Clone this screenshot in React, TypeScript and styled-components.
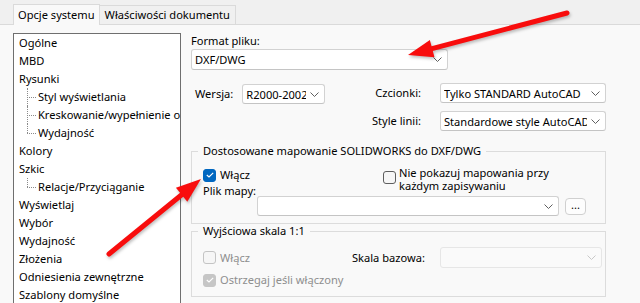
import React from 'react';
import styled, {createGlobalStyle} from 'styled-components';

const GlobalStyle = createGlobalStyle`
  html, body {
    margin: 0;
    padding: 0;
  }
  body {
    font-family: "Noto Sans", "Open Sans", sans-serif;
    font-size: 11.1px;
    color: #000;
    background: #f0f0f0;
  }
`;

interface TreeNode {
  name: string;
  child?: boolean;
  last?: boolean;
}

const treeItems: TreeNode[] = [
  {name: 'Ogólne'},
  {name: 'MBD'},
  {name: 'Rysunki'},
  {name: 'Styl wyświetlania', child: true},
  {name: 'Kreskowanie/wypełnienie obszaru', child: true},
  {name: 'Wydajność', child: true, last: true},
  {name: 'Kolory'},
  {name: 'Szkic'},
  {name: 'Relacje/Przyciąganie', child: true, last: true},
  {name: 'Wyświetlaj'},
  {name: 'Wybór'},
  {name: 'Wydajność'},
  {name: 'Złożenia'},
  {name: 'Odniesienia zewnętrzne'},
  {name: 'Szablony domyślne'},
];

export default function App() {
  return (
    <Page>
      <GlobalStyle/>
      <TabBar>
        <Tab active>Opcje systemu</Tab>
        <Tab>Właściwości dokumentu</Tab>
      </TabBar>

      <Content>
        <Tree>
          {treeItems.map((item, i) => (
            <TreeItem key={i} child={item.child} last={item.last}>
              {item.name}
            </TreeItem>
          ))}
        </Tree>

        <Pane>
          <FieldLabel>Format pliku:</FieldLabel>
          <Select width={257} height={21}>DXF/DWG</Select>

          <OptionsRow>
            <VersionBox>
              <FieldLabel>Wersja:</FieldLabel>
              <Select width={83} height={20}>R2000-2002</Select>
            </VersionBox>
            <OptionsGrid>
              <FieldLabel>Czcionki:</FieldLabel>
              <Select width={166} height={20}>Tylko STANDARD AutoCAD</Select>
              <FieldLabel>Style linii:</FieldLabel>
              <Select width={166} height={20}>Standardowe style AutoCAD</Select>
            </OptionsGrid>
          </OptionsRow>

          <Group>
            <Legend>Dostosowane mapowanie SOLIDWORKS do DXF/DWG</Legend>
            <MapRow>
              <MapLeft>
                <CheckItem>
                  <Check checked/>
                  <span>Włącz</span>
                </CheckItem>
                <MapLabel>Plik mapy:</MapLabel>
              </MapLeft>
              <NoShowItem>
                <Check/>
                <TwoLine>
                  Nie pokazuj mapowania przy<br/>każdym zapisywaniu
                </TwoLine>
              </NoShowItem>
            </MapRow>
            <ComboRow>
              <Select width={302} height={20}/>
              <DotsButton>...</DotsButton>
            </ComboRow>
          </Group>

          <Group second>
            <Legend>Wyjściowa skala 1:1</Legend>
            <ScaleRow>
              <CheckItem disabled width={149}>
                <Check disabled/>
                <span>Włącz</span>
              </CheckItem>
              <ScaleLabel>Skala bazowa:</ScaleLabel>
              <Select width={162} height={21} disabled/>
            </ScaleRow>
            <WarnRow>
              <CheckItem disabled>
                <Check checked disabled/>
                <span>Ostrzegaj jeśli włączony</span>
              </CheckItem>
            </WarnRow>
          </Group>
        </Pane>
      </Content>

      <Arrows viewBox="0 0 640 303">
        <Arrow from={[567, 13]} to={[408, 55]}/>
        <Arrow from={[109, 254]} to={[201, 179]}/>
      </Arrows>
    </Page>
  );
}

function Select({width, height, disabled, children}: {
  width: number;
  height: number;
  disabled?: boolean;
  children?: React.ReactNode;
}) {
  return (
    <SelectBox style={{width, height}} disabled={disabled}>
      <SelectText>{children}</SelectText>
      <svg width="9" height="5" viewBox="0 0 9 5">
        <path d="M0.5 0.5 L4.5 4.5 L8.5 0.5" fill="none" stroke={disabled ? '#c8c8c8' : '#5f5f5f'} strokeWidth="1"/>
      </svg>
    </SelectBox>
  );
}

function Check({checked, disabled}: {checked?: boolean; disabled?: boolean}) {
  return (
    <CheckBox checked={checked} disabled={disabled}>
      {checked &&
        <svg width="8" height="6" viewBox="0 0 8 6">
          <path d="M0.8 3 L3 5 L7.2 0.8" fill="none" stroke="#fff" strokeWidth="1.1"/>
        </svg>
      }
    </CheckBox>
  );
}

function Arrow({from, to}: {from: [number, number]; to: [number, number]}) {
  const dx = from[0] - to[0];
  const dy = from[1] - to[1];
  const len = Math.hypot(dx, dy);
  const ux = dx / len;
  const uy = dy / len;
  const head = 25;
  const half = 9;
  const bx = to[0] + ux * head;
  const by = to[1] + uy * head;
  const p1 = `${bx - uy * half},${by + ux * half}`;
  const p2 = `${bx + uy * half},${by - ux * half}`;
  const nx = to[0] + ux * (head - 6);
  const ny = to[1] + uy * (head - 6);
  return (
    <g>
      <line x1={from[0]} y1={from[1]} x2={nx} y2={ny} stroke="#f80d0d" strokeWidth="5" strokeLinecap="round"/>
      <polygon points={`${to[0]},${to[1]} ${p1} ${p2}`} fill="#f80d0d"/>
    </g>
  );
}

const Page = styled.div`
  position: relative;
  width: 640px;
  height: 303px;
  overflow: hidden;
  display: flex;
  flex-direction: column;
`;

const TabBar = styled.div`
  height: 25px;
  box-sizing: border-box;
  display: flex;
  align-items: flex-end;
  padding-left: 13px;
  border-bottom: 1px solid #dadada;
  background: #f0f0f0;
`;

const Tab = styled.div<{active?: boolean}>`
  box-sizing: border-box;
  height: ${props => props.active ? '21px' : '19px'};
  line-height: ${props => props.active ? '20px' : '18px'};
  padding: 0 ${props => props.active ? '4px' : '5px'};
  margin-bottom: ${props => props.active ? '-1px' : '0'};
  background: ${props => props.active ? '#f9f9f9' : '#f0f0f0'};
  border: 1px solid #dadada;
  border-bottom: none;
  border-left: ${props => props.active ? '1px solid #dadada' : 'none'};
  white-space: nowrap;
`;

const Content = styled.div`
  flex: 1;
  min-height: 0;
  display: flex;
  padding: 8px 0 0 13px;
  background: #f9f9f9;
`;

const Tree = styled.div`
  flex-shrink: 0;
  width: 168px;
  box-sizing: border-box;
  border: 1px solid #6f6f6f;
  border-bottom: none;
  background: #fff;
  overflow: hidden;
`;

const TreeItem = styled.div<{child?: boolean; last?: boolean}>`
  position: relative;
  height: 18px;
  line-height: 18px;
  padding-left: ${props => props.child ? '24px' : '5px'};
  white-space: nowrap;

  &::before {
    content: ${props => props.child ? "''" : 'none'};
    position: absolute;
    left: 13px;
    top: 9px;
    width: 9px;
    border-top: 1px dotted #8a8a8a;
  }

  &::after {
    content: ${props => props.child ? "''" : 'none'};
    position: absolute;
    left: 13px;
    top: 0;
    height: ${props => props.last ? '9px' : '18px'};
    border-left: 1px dotted #8a8a8a;
  }
`;

const Pane = styled.div`
  margin-left: 10px;
  width: 415px;
  padding-top: 1px;
  display: flex;
  flex-direction: column;
`;

const FieldLabel = styled.div`
  line-height: 14px;
  white-space: nowrap;
`;

const SelectBox = styled.div<{disabled?: boolean}>`
  box-sizing: border-box;
  display: flex;
  align-items: center;
  gap: 4px;
  padding: 0 5px 0 3px;
  margin-top: 1px;
  background: ${props => props.disabled ? '#fafafa' : '#fff'};
  border: 1px solid ${props => props.disabled ? '#e6e6e6' : '#d2d2d2'};
  border-bottom-color: ${props => props.disabled ? '#e6e6e6' : '#c4c4c4'};
  border-radius: 3px;
`;

const SelectText = styled.span`
  flex: 1;
  overflow: hidden;
  white-space: nowrap;
`;

const OptionsRow = styled.div`
  display: flex;
  align-items: flex-start;
  margin-top: 13px;
`;

const VersionBox = styled.div`
  display: flex;
  align-items: center;
  gap: 9px;
  padding-left: 4px;
  margin-top: 1px;

  ${SelectBox} {
    margin-top: 0;
  }
`;

const OptionsGrid = styled.div`
  margin-left: auto;
  display: grid;
  grid-template-columns: auto 166px;
  column-gap: 19px;
  row-gap: 8px;
  align-items: center;

  ${FieldLabel} {
    justify-self: end;
  }

  ${SelectBox} {
    margin-top: 0;
  }
`;

const Group = styled.fieldset<{second?: boolean}>`
  margin: ${props => props.second ? '0' : '13px'} 0 0 0;
  padding: 0 0 ${props => props.second ? '9px' : '7px'} 11px;
  border: 1px solid #dcdcdc;
  min-width: 0;
`;

const Legend = styled.legend`
  padding: 0 5px;
  margin-left: -5px;
  line-height: 14px;
`;

const MapRow = styled.div`
  display: flex;
  align-items: flex-start;
`;

const MapLeft = styled.div`
  width: 180px;
  margin-top: 10px;
  display: flex;
  flex-direction: column;
`;

const CheckItem = styled.label<{disabled?: boolean; width?: number}>`
  display: flex;
  align-items: center;
  gap: 4px;
  height: 14px;
  line-height: 14px;
  white-space: nowrap;
  color: ${props => props.disabled ? '#8e8e8e' : '#000'};
  width: ${props => props.width ? `${props.width}px` : 'auto'};
  flex-shrink: 0;
`;

const CheckBox = styled.span<{checked?: boolean; disabled?: boolean}>`
  box-sizing: border-box;
  width: 13px;
  height: 13px;
  flex-shrink: 0;
  display: flex;
  align-items: center;
  justify-content: center;
  border-radius: 3px;
  background: ${props => props.checked
    ? (props.disabled ? '#c6c6c6' : '#0067c0')
    : '#f6f6f6'};
  border: 1px solid ${props => props.checked
    ? (props.disabled ? '#c6c6c6' : '#0067c0')
    : (props.disabled ? '#c4c4c4' : '#5e5e5e')};
`;

const MapLabel = styled.div`
  margin-top: 2px;
  line-height: 14px;
`;

const NoShowItem = styled.div`
  display: flex;
  align-items: flex-start;
  gap: 3px;
  margin-top: 8px;

  ${CheckBox} {
    margin-top: 5px;
  }
`;

const TwoLine = styled.div`
  line-height: 13px;
`;

const ComboRow = styled.div`
  display: flex;
  align-items: center;
  gap: 6px;
  margin-top: -2px;
  margin-left: 54px;

  ${SelectBox} {
    margin-top: 0;
  }
`;

const DotsButton = styled.div`
  box-sizing: border-box;
  width: 21px;
  height: 17px;
  line-height: 12px;
  text-align: center;
  background: #fdfdfd;
  border: 1px solid #d0d0d0;
  border-radius: 4px;
`;

const ScaleRow = styled.div`
  display: flex;
  align-items: center;
  margin-top: 9px;

  ${SelectBox} {
    margin-top: 0;
  }
`;

const ScaleLabel = styled.div`
  width: 88px;
  white-space: nowrap;
`;

const WarnRow = styled.div`
  margin-top: 5px;
`;

const Arrows = styled.svg`
  position: absolute;
  left: 0;
  top: 0;
  width: 640px;
  height: 303px;
  pointer-events: none;
  filter: drop-shadow(1px 2px 1.5px rgba(0, 0, 0, 0.25));
`;
